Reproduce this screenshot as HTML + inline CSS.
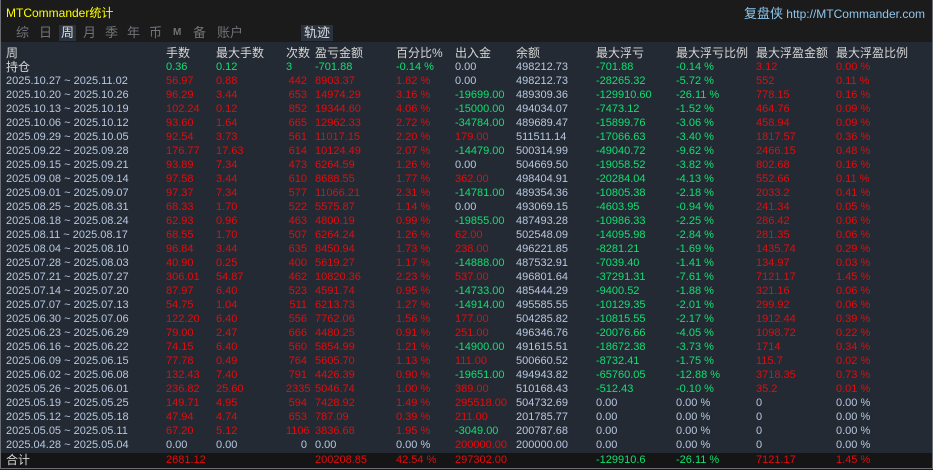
<!DOCTYPE html>
<html><head><meta charset="utf-8">
<style>
*{margin:0;padding:0;box-sizing:border-box}
body{width:933px;height:470px;background:#1b1b1b;overflow:hidden;font-family:"Liberation Sans","Noto Sans CJK SC",sans-serif;position:relative}
#frame{position:absolute;left:0;top:0;width:933px;height:469px;border:1px solid #6a6e74;border-top:none}
.title{position:absolute;left:6px;top:4px;color:#ffff00;font-size:12px}
.site{position:absolute;right:8px;top:3px;color:#8ec6ee;font-size:12px}
.site b{font-weight:normal;font-size:13px}
.tabs{position:absolute;left:10px;top:25px;font-size:13px;color:#6f737a}
.tabs span{position:absolute;top:0;height:16px;line-height:16px;white-space:nowrap}
.sel{background:#2a323d;color:#d9dde2;padding:0 2px}
#tbl{position:absolute;left:1px;top:42px;width:931px;height:412px;background:#232a33}
table{position:absolute;left:0;top:4px;border-collapse:collapse;table-layout:fixed;font-size:11px;width:931px}
td{height:14px;line-height:14px;padding:0;white-space:nowrap;overflow:visible;color:#b8c8e0}
td:first-child{padding-left:5px}
tr.h td{color:#d6d6d6;font-size:12px}
tr.h td:first-child,tr.c td:first-child{font-size:12px;color:#d6d6d6}
td.n{text-align:right;padding-right:8px}
.r{color:#e80a0a}.g{color:#10e070}
#tot{position:absolute;left:1px;top:453px;width:931px;height:15px;background:#151515}
#tot table{top:0}
</style></head><body>
<div id="frame"></div>
<div class="title">MTCommander统计</div>
<div class="site"><b>复盘侠</b> http://MTCommander.com</div>
<div class="tabs">
<span style="left:6px">综</span><span style="left:29px">日</span><span class="sel" style="left:49px">周</span><span style="left:73px">月</span><span style="left:95px">季</span><span style="left:117px">年</span><span style="left:139px">币</span><span style="left:163px;font-size:10px;font-weight:bold">M</span><span style="left:183px">备</span><span style="left:207px">账户</span><span class="sel" style="left:291px;padding:0 3px">轨迹</span>
</div>
<div id="tbl"><table>
<colgroup><col style="width:165px"><col style="width:50px"><col style="width:70px"><col style="width:29px"><col style="width:81px"><col style="width:59px"><col style="width:61px"><col style="width:80px"><col style="width:80px"><col style="width:80px"><col style="width:80px"><col></colgroup>
<tr class="h"><td>周</td><td>手数</td><td>最大手数</td><td>次数</td><td>盈亏金额</td><td>百分比%</td><td>出入金</td><td>余额</td><td>最大浮亏</td><td>最大浮亏比例</td><td>最大浮盈金额</td><td>最大浮盈比例</td></tr>
<tr class="c"><td>持仓</td><td class="g">0.36</td><td class="g">0.12</td><td class="g">3</td><td class="g">-701.88</td><td class="g">-0.14 %</td><td>0.00</td><td>498212.73</td><td class="g">-701.88</td><td class="g">-0.14 %</td><td class="r">3.12</td><td class="r">0.00 %</td></tr>
<tr><td>2025.10.27 ~ 2025.11.02</td><td class="r">56.97</td><td class="r">0.88</td><td class="r n">442</td><td class="r">8903.37</td><td class="r">1.82 %</td><td>0.00</td><td>498212.73</td><td class="g">-28265.32</td><td class="g">-5.72 %</td><td class="r">552</td><td class="r">0.11 %</td></tr>
<tr><td>2025.10.20 ~ 2025.10.26</td><td class="r">96.29</td><td class="r">3.44</td><td class="r n">653</td><td class="r">14974.29</td><td class="r">3.16 %</td><td class="g">-19699.00</td><td>489309.36</td><td class="g">-129910.60</td><td class="g">-26.11 %</td><td class="r">778.15</td><td class="r">0.16 %</td></tr>
<tr><td>2025.10.13 ~ 2025.10.19</td><td class="r">102.24</td><td class="r">0.12</td><td class="r n">852</td><td class="r">19344.60</td><td class="r">4.06 %</td><td class="g">-15000.00</td><td>494034.07</td><td class="g">-7473.12</td><td class="g">-1.52 %</td><td class="r">464.76</td><td class="r">0.09 %</td></tr>
<tr><td>2025.10.06 ~ 2025.10.12</td><td class="r">93.60</td><td class="r">1.64</td><td class="r n">665</td><td class="r">12962.33</td><td class="r">2.72 %</td><td class="g">-34784.00</td><td>489689.47</td><td class="g">-15899.76</td><td class="g">-3.06 %</td><td class="r">458.94</td><td class="r">0.09 %</td></tr>
<tr><td>2025.09.29 ~ 2025.10.05</td><td class="r">92.54</td><td class="r">3.73</td><td class="r n">561</td><td class="r">11017.15</td><td class="r">2.20 %</td><td class="r">179.00</td><td>511511.14</td><td class="g">-17066.63</td><td class="g">-3.40 %</td><td class="r">1817.57</td><td class="r">0.36 %</td></tr>
<tr><td>2025.09.22 ~ 2025.09.28</td><td class="r">176.77</td><td class="r">17.63</td><td class="r n">614</td><td class="r">10124.49</td><td class="r">2.07 %</td><td class="g">-14479.00</td><td>500314.99</td><td class="g">-49040.72</td><td class="g">-9.62 %</td><td class="r">2466.15</td><td class="r">0.48 %</td></tr>
<tr><td>2025.09.15 ~ 2025.09.21</td><td class="r">93.89</td><td class="r">7.34</td><td class="r n">473</td><td class="r">6264.59</td><td class="r">1.26 %</td><td>0.00</td><td>504669.50</td><td class="g">-19058.52</td><td class="g">-3.82 %</td><td class="r">802.68</td><td class="r">0.16 %</td></tr>
<tr><td>2025.09.08 ~ 2025.09.14</td><td class="r">97.58</td><td class="r">3.44</td><td class="r n">610</td><td class="r">8688.55</td><td class="r">1.77 %</td><td class="r">362.00</td><td>498404.91</td><td class="g">-20284.04</td><td class="g">-4.13 %</td><td class="r">552.66</td><td class="r">0.11 %</td></tr>
<tr><td>2025.09.01 ~ 2025.09.07</td><td class="r">97.37</td><td class="r">7.34</td><td class="r n">577</td><td class="r">11066.21</td><td class="r">2.31 %</td><td class="g">-14781.00</td><td>489354.36</td><td class="g">-10805.38</td><td class="g">-2.18 %</td><td class="r">2033.2</td><td class="r">0.41 %</td></tr>
<tr><td>2025.08.25 ~ 2025.08.31</td><td class="r">68.33</td><td class="r">1.70</td><td class="r n">522</td><td class="r">5575.87</td><td class="r">1.14 %</td><td>0.00</td><td>493069.15</td><td class="g">-4603.95</td><td class="g">-0.94 %</td><td class="r">241.34</td><td class="r">0.05 %</td></tr>
<tr><td>2025.08.18 ~ 2025.08.24</td><td class="r">62.93</td><td class="r">0.96</td><td class="r n">463</td><td class="r">4800.19</td><td class="r">0.99 %</td><td class="g">-19855.00</td><td>487493.28</td><td class="g">-10986.33</td><td class="g">-2.25 %</td><td class="r">286.42</td><td class="r">0.06 %</td></tr>
<tr><td>2025.08.11 ~ 2025.08.17</td><td class="r">68.55</td><td class="r">1.70</td><td class="r n">507</td><td class="r">6264.24</td><td class="r">1.26 %</td><td class="r">62.00</td><td>502548.09</td><td class="g">-14095.98</td><td class="g">-2.84 %</td><td class="r">281.35</td><td class="r">0.06 %</td></tr>
<tr><td>2025.08.04 ~ 2025.08.10</td><td class="r">96.84</td><td class="r">3.44</td><td class="r n">635</td><td class="r">8450.94</td><td class="r">1.73 %</td><td class="r">238.00</td><td>496221.85</td><td class="g">-8281.21</td><td class="g">-1.69 %</td><td class="r">1435.74</td><td class="r">0.29 %</td></tr>
<tr><td>2025.07.28 ~ 2025.08.03</td><td class="r">40.90</td><td class="r">0.25</td><td class="r n">400</td><td class="r">5619.27</td><td class="r">1.17 %</td><td class="g">-14888.00</td><td>487532.91</td><td class="g">-7039.40</td><td class="g">-1.41 %</td><td class="r">134.97</td><td class="r">0.03 %</td></tr>
<tr><td>2025.07.21 ~ 2025.07.27</td><td class="r">306.01</td><td class="r">54.87</td><td class="r n">462</td><td class="r">10820.36</td><td class="r">2.23 %</td><td class="r">537.00</td><td>496801.64</td><td class="g">-37291.31</td><td class="g">-7.61 %</td><td class="r">7121.17</td><td class="r">1.45 %</td></tr>
<tr><td>2025.07.14 ~ 2025.07.20</td><td class="r">87.97</td><td class="r">6.40</td><td class="r n">523</td><td class="r">4591.74</td><td class="r">0.95 %</td><td class="g">-14733.00</td><td>485444.29</td><td class="g">-9400.52</td><td class="g">-1.88 %</td><td class="r">321.16</td><td class="r">0.06 %</td></tr>
<tr><td>2025.07.07 ~ 2025.07.13</td><td class="r">54.75</td><td class="r">1.04</td><td class="r n">511</td><td class="r">6213.73</td><td class="r">1.27 %</td><td class="g">-14914.00</td><td>495585.55</td><td class="g">-10129.35</td><td class="g">-2.01 %</td><td class="r">299.92</td><td class="r">0.06 %</td></tr>
<tr><td>2025.06.30 ~ 2025.07.06</td><td class="r">122.20</td><td class="r">6.40</td><td class="r n">556</td><td class="r">7762.06</td><td class="r">1.56 %</td><td class="r">177.00</td><td>504285.82</td><td class="g">-10815.55</td><td class="g">-2.17 %</td><td class="r">1912.44</td><td class="r">0.39 %</td></tr>
<tr><td>2025.06.23 ~ 2025.06.29</td><td class="r">79.00</td><td class="r">2.47</td><td class="r n">666</td><td class="r">4480.25</td><td class="r">0.91 %</td><td class="r">251.00</td><td>496346.76</td><td class="g">-20076.66</td><td class="g">-4.05 %</td><td class="r">1098.72</td><td class="r">0.22 %</td></tr>
<tr><td>2025.06.16 ~ 2025.06.22</td><td class="r">74.15</td><td class="r">6.40</td><td class="r n">560</td><td class="r">5854.99</td><td class="r">1.21 %</td><td class="g">-14900.00</td><td>491615.51</td><td class="g">-18672.38</td><td class="g">-3.73 %</td><td class="r">1714</td><td class="r">0.34 %</td></tr>
<tr><td>2025.06.09 ~ 2025.06.15</td><td class="r">77.78</td><td class="r">0.49</td><td class="r n">764</td><td class="r">5605.70</td><td class="r">1.13 %</td><td class="r">111.00</td><td>500660.52</td><td class="g">-8732.41</td><td class="g">-1.75 %</td><td class="r">115.7</td><td class="r">0.02 %</td></tr>
<tr><td>2025.06.02 ~ 2025.06.08</td><td class="r">132.43</td><td class="r">7.40</td><td class="r n">791</td><td class="r">4426.39</td><td class="r">0.90 %</td><td class="g">-19651.00</td><td>494943.82</td><td class="g">-65760.05</td><td class="g">-12.88 %</td><td class="r">3718.35</td><td class="r">0.73 %</td></tr>
<tr><td>2025.05.26 ~ 2025.06.01</td><td class="r">236.82</td><td class="r">25.60</td><td class="r n">2335</td><td class="r">5046.74</td><td class="r">1.00 %</td><td class="r">389.00</td><td>510168.43</td><td class="g">-512.43</td><td class="g">-0.10 %</td><td class="r">35.2</td><td class="r">0.01 %</td></tr>
<tr><td>2025.05.19 ~ 2025.05.25</td><td class="r">149.71</td><td class="r">4.95</td><td class="r n">594</td><td class="r">7428.92</td><td class="r">1.49 %</td><td class="r">295518.00</td><td>504732.69</td><td>0.00</td><td>0.00 %</td><td>0</td><td>0.00 %</td></tr>
<tr><td>2025.05.12 ~ 2025.05.18</td><td class="r">47.94</td><td class="r">4.74</td><td class="r n">653</td><td class="r">787.09</td><td class="r">0.39 %</td><td class="r">211.00</td><td>201785.77</td><td>0.00</td><td>0.00 %</td><td>0</td><td>0.00 %</td></tr>
<tr><td>2025.05.05 ~ 2025.05.11</td><td class="r">67.20</td><td class="r">5.12</td><td class="r n">1106</td><td class="r">3836.68</td><td class="r">1.95 %</td><td class="g">-3049.00</td><td>200787.68</td><td>0.00</td><td>0.00 %</td><td>0</td><td>0.00 %</td></tr>
<tr><td>2025.04.28 ~ 2025.05.04</td><td>0.00</td><td>0.00</td><td class="n">0</td><td>0.00</td><td>0.00 %</td><td class="r">200000.00</td><td>200000.00</td><td>0.00</td><td>0.00 %</td><td>0</td><td>0.00 %</td></tr>
</table></div>
<div id="tot"><table>
<colgroup><col style="width:165px"><col style="width:50px"><col style="width:70px"><col style="width:29px"><col style="width:81px"><col style="width:59px"><col style="width:61px"><col style="width:80px"><col style="width:80px"><col style="width:80px"><col style="width:80px"><col></colgroup>
<tr class="c"><td>合计</td><td class="r">2681.12</td><td></td><td></td><td class="r">200208.85</td><td class="r">42.54 %</td><td class="r">297302.00</td><td></td><td class="g">-129910.6</td><td class="g">-26.11 %</td><td class="r">7121.17</td><td class="r">1.45 %</td></tr>
</table></div>
</body></html>
